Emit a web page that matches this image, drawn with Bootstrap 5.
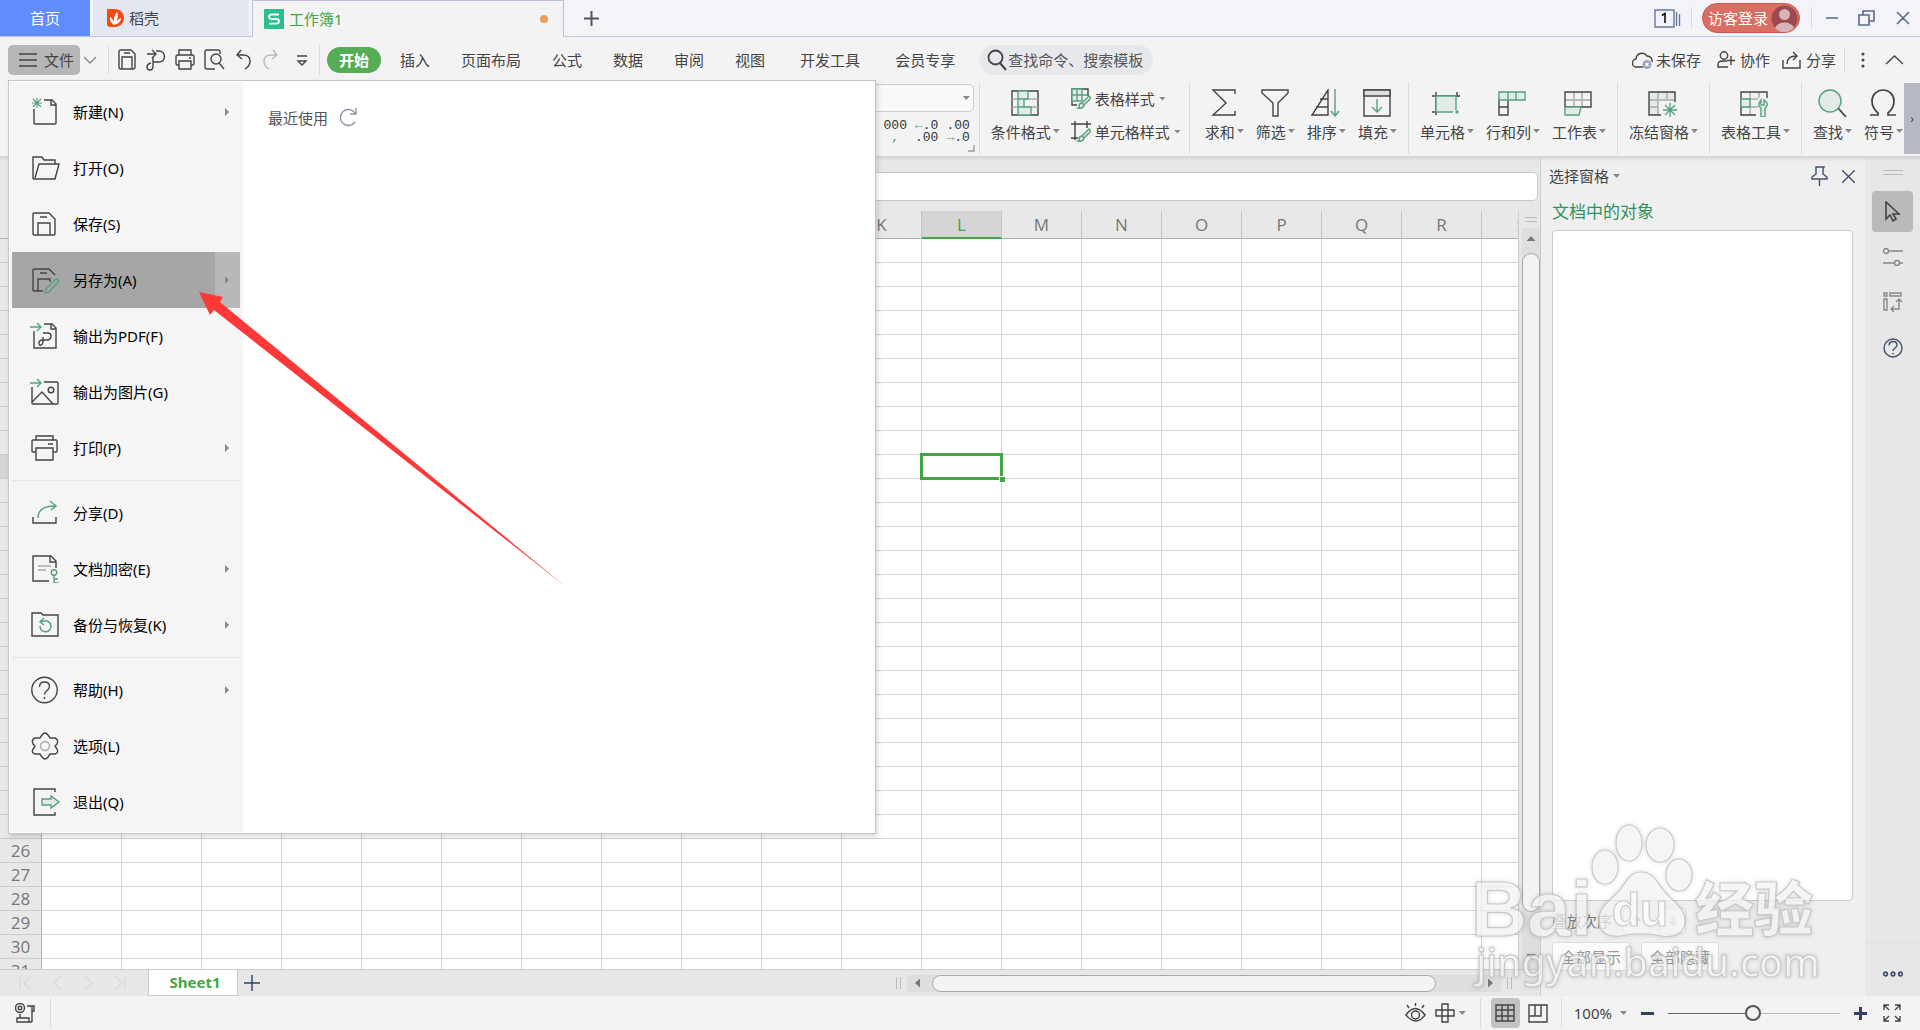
<!DOCTYPE html>
<html lang="zh-CN">
<head>
<meta charset="utf-8">
<meta name="viewport" content="width=device-width, initial-scale=1">
<title>工作簿1</title>
<link rel="stylesheet" href="https://cdn.jsdelivr.net/npm/bootstrap@5.3.0/dist/css/bootstrap.min.css">
<style>
body{font-family:"Noto Sans","Noto Sans CJK SC",sans-serif;font-size:15px;line-height:20px;color:#444;background:#f3f3f3;overflow:hidden}
svg{fill:none;stroke:#444;stroke-width:1.4;flex:none;display:block}
svg .g{stroke:#55a27b}
svg .gf{stroke:#55a27b;fill:#e2ebe6}
svg .l{stroke:#aaa}
button,.doc-tab{font:inherit;color:inherit;background:none;border:0;padding:0;text-decoration:none;white-space:nowrap}
.caret{width:7px;height:4px;background:#888;clip-path:polygon(0 0,100% 0,50% 100%);flex:none}
.vline{width:1px;background:#dcdcdc;flex:none}
/* title bar */
.titlebar{height:37px;background:#f2f4f9;border-bottom:1px solid #bdc7d9}
.doc-tab{height:36px;display:flex;align-items:center;background:#e3e7f0}
.tab-home{width:90px;background:#5f8dff;color:#fff;justify-content:center;margin-right:3px}
.tab-docer{width:156px;padding-left:14px;gap:5px;margin-right:3px}
.tab-book{width:312px;height:37px;padding:0 15px 0 11px;gap:5px;background:#f3f3f3;border:1px solid #bdc1d3;border-bottom:0;color:#3fa83f}
.unsaved{width:8px;height:8px;border-radius:50%;background:#e8a05c}
.login{width:98px;height:30px;border-radius:15px;background:#da6e62;border:1px solid #d0584c;color:#fff;padding:0 1px 0 5px}
/* menu row */
.menurow{height:42px}
.file-btn{width:72px;height:30px;background:#b7b7b7;border-radius:5px;padding-left:11px;gap:7px}
.start-pill{height:26px;border-radius:13px;background:#55ae55;color:#fff;font-weight:700;padding:0 12px}
.ribbon-tabs{gap:31px;margin:0 24px 0 19px}
.search-pill{width:174px;height:30px;border-radius:15px;background:#e6e8eb;padding-left:8px}
.search-pill input{border:0;background:none;width:138px;padding:0;outline:0;color:#555}
.search-pill input::placeholder{color:#555;opacity:1}
/* ribbon */
.ribbon{height:77px}
.ribbon .vline{margin:3px 0 2px}
.rgroup{padding-right:10px}
.rbtn{padding-left:11px;padding-right:10px;position:relative;display:flex;flex-direction:column;justify-content:flex-start;padding-top:10px}
.rbtn svg{align-self:center;margin:0 -4px 0 4px}
.rbtn span{margin-top:5px;height:20px}
.rbtn .caret{position:absolute;right:1px;top:50px}
.numfmt{width:140px;padding:5px 5px 0 0}
.numfmt select{height:28px;border:1px solid #ccc;border-radius:5px;background:#f9f9f9;appearance:none;width:100%}
.numfmt .caret{position:absolute;right:9px;top:17px}
.numtxt{font:13px/12px "Liberation Mono",monospace;color:#333;white-space:pre;text-align:right}
.numtxt i{font-style:normal;color:#55a27b}
.style-col{padding:9px 8px 0 10px;gap:12px}
.more-strip{width:16px;background:#b6b9c3;margin:4px 0 2px;font-size:12px}
/* workspace */
.workspace{border-top:1px solid #d4d4d4;background:#e7e7e7;box-shadow:inset 0 5px 4px -4px #ccc}
.formula{padding:15px 2px 0 12px;height:54px}
.formula input{height:29px;border:1px solid #c8c8c8;border-radius:5px;width:100%}
.sheet-clip{overflow:hidden;border-right:1px solid #ccc;background:#fff;flex:1 1 0;min-width:0}
.cells{border-collapse:separate;border-spacing:0;table-layout:fixed;width:1562px}
.cells th{font:17px/22px "Open Sans","Noto Sans",sans-serif;color:#777;text-align:center;padding:0;background:#e8e8e8}
.cells thead th{height:28px;border-bottom:1px solid #b0b0b0;border-right:1px solid #c4c4c4}
.cells tbody tr{height:24px}
.cells tbody th,.cells tbody td{height:24px;padding:0;border-bottom:1px solid #d2d2d2;border-right:1px solid #d2d2d2}
.cells tbody th{border-right-color:#b0b0b0;border-bottom-color:#ccc}
.cells thead .on{background:#d5d5d5;color:#42a742;box-shadow:inset 0 -1px #42a742;border-bottom-color:#42a742}
.cells tbody .on{background:#d5d5d5}
.cells .pick{position:relative}
.cells .pick::before{content:"";position:absolute;inset:-2px;border:3px solid #42a742}
.cells .pick::after{content:"";position:absolute;right:-4px;bottom:-4px;width:6px;height:6px;background:#42a742;border:1px solid #fff;border-width:1px 0 0 1px}
.vbar{width:21px;padding-left:3px;flex:none}
.vbar .grip{height:17px;margin:0 3px;padding-top:6px}
.grip::before{content:"";display:block;height:5px;border:1px solid #bbb;border-width:1px 0}
.trk{background:#dedede}
.thumb{background:#f3f3f3;border:1px solid #a8a8a8;border-radius:9px}
.tri-u,.tri-d,.tri-l,.tri-r{background:#777;flex:none}
.tri-u,.tri-d{width:9px;height:5px}
.tri-l,.tri-r{width:5px;height:9px}
.tri-u{clip-path:polygon(50% 0,100% 100%,0 100%)}
.tri-d{clip-path:polygon(0 0,100% 0,50% 100%)}
.tri-l{clip-path:polygon(100% 0,100% 100%,0 50%)}
.tri-r{clip-path:polygon(0 0,100% 50%,0 100%)}
.sheetbar{height:27px;border-top:1px solid #ccc;flex:none}
.sheetnav{width:148px;padding-left:19px}
.sheet-tab{width:90px;height:26px;background:#fff;border:1px solid #ccc;border-top:0;color:#42a742;font-weight:700;padding-left:4px;margin-top:-1px}
.hgrip{width:5px;height:12px;border:1px solid #bbb;border-width:0 1px}
.hbar{width:594px;height:17px;margin:0 6px}
/* selection pane */
.pane{width:325px;flex:none;background:#efefef;border-left:1px solid #ccc;box-shadow:inset 0 5px 4px -4px #ccc}
.pane-head{padding:9px 10px 0 8px}
.pane h2{font-size:17px;line-height:24px;color:#2f935c;margin:14px 0 6px 11px;font-weight:400}
.objects{margin:0 12px 0 11px;background:#fff;border:1px solid #ccc;border-radius:4px}
.pane-foot{padding:7px 11px 25px;color:#777}
.pane-foot button{background:#fbfbfb;border:1px solid #ddd;border-radius:3px;color:#999}
.ord{width:26px;height:26px}
.wide{width:78px;height:29px}
.rail{width:55px;flex:none}
.rail-on{width:41px;height:41px;border-radius:4px;background:#bababa}
.railgrip{width:20px;margin-top:13px}
/* status bar */
.statusbar{height:34px}
.view-on{width:29px;height:30px;border-radius:4px;background:#c2c2c2}
.zoomer{appearance:none;width:172px;height:18px;background:linear-gradient(90deg,#666 50%,#b8b8b8 50%) center/100% 1px no-repeat}
.zoomer::-webkit-slider-thumb{appearance:none;width:16px;height:16px;border-radius:50%;background:#f3f3f3;border:2px solid #555}
/* file menu */
.filemenu{position:absolute;left:8px;top:80px;width:868px;border:1px solid #c6c6c6;background:#fff;padding:1px;box-shadow:2px 3px 5px #0002;z-index:5}
.file-list{width:233px;background:#f5f5f5;padding:2px 3px 2px 2px}
.fitem{height:56px;width:100%;padding-left:18px;color:#000;display:flex;align-items:center;gap:11px}
.fitem .sub{margin-left:auto;width:25px;height:56px;display:flex;align-items:center;padding-left:10px}
.fitem .tri-r{background:#888;width:4px;height:8px}
.fitem.on{background:#a6a6a6}
.fitem.on .sub{background:#b8b8b8}
.fsep{height:9px;padding-top:4px}
.fsep::before{content:"";display:block;height:1px;background:#e6e6e6}
.recent{padding:26px 0 0 25px;gap:11px;color:#555}
.pointer{position:absolute;left:190px;top:280px;z-index:6;pointer-events:none}
.wmark{position:absolute;right:90px;bottom:20px;z-index:6;pointer-events:none;filter:drop-shadow(0 0 2px #0003)}
.wmark *{fill:#fff;fill-opacity:.7;stroke:#c0c0c0;stroke-opacity:.8;stroke-width:1.2}
</style>
<script src="https://cdn.jsdelivr.net/npm/bootstrap@5.3.0/dist/js/bootstrap.bundle.min.js"></script>
</head>
<body class="vh-100 d-flex flex-column position-relative">

<header class="titlebar d-flex align-items-start flex-shrink-0">
  <a class="doc-tab tab-home" href="#">首页</a>
  <a class="doc-tab tab-docer" href="#">
    <svg width="17" height="20" viewBox="0 0 17 20"><path d="M0 1h8c5 0 9 4 9 9s-4 9-9 9H3a3 3 0 0 1-3-3z" fill="#fa4a14" stroke="none"/><path d="M7 17C4 15 2.500 12 3 9c2 1 3 3 4 5-.5-4 .5-7 3-10 1.500 3 1 6-1 10 1-2 3-3 5-4-.5 4-3 6-7 7z" fill="#fff" stroke="none"/></svg>
    稻壳</a>
  <a class="doc-tab tab-book" href="#">
    <svg width="20" height="20" viewBox="0 0 20 20"><rect width="20" height="20" rx="1" fill="#2bc08a" stroke="none"/><path d="M15 5.500H8q-3 0-3 2.200T8 10h4q3 0 3 2.300t-3 2.300H5" stroke="#fff" stroke-width="1.800"/></svg>
    工作簿1<i class="unsaved ms-auto"></i></a>
  <button class="align-self-center px-3 ms-1" aria-label="新建标签"><svg width="15" height="15" viewBox="0 0 15 15" style="stroke:#555;stroke-width:2"><path d="M7.500 0v15M0 7.500h15"/></svg></button>
  <div class="ms-auto d-flex align-items-center h-100" style="padding-right:10px">
    <svg width="27" height="19" viewBox="0 0 27 19" style="stroke:#6a789a"><path d="M1 1h19v17H1zM22.500 3v14M25.500 5v12"/><path d="M8 6.500l3-2V14" stroke="#111" stroke-width="1.600"/></svg>
    <i class="vline" style="height:22px;margin:0 10px"></i>
    <button class="login d-flex align-items-center justify-content-between">访客登录
      <svg width="27" height="27" viewBox="0 0 27 27" style="stroke:none"><circle cx="13.500" cy="13.500" r="13" fill="#9c4a52"/><circle cx="13.500" cy="9.500" r="5.500" fill="#d9b3b5"/><path d="M4 23a10 8 0 0 1 19 0 13 13 0 0 1-19 0z" fill="#d9b3b5"/></svg>
    </button>
    <i class="vline" style="height:22px;margin:0 14px 0 11px"></i>
    <svg width="84" height="18" viewBox="0 0 84 18" style="stroke:#5a6a8c;stroke-width:1.600"><path d="M0 9h12M33 6h10v10H33zM37 6V2h11v10h-5M71 3l12 12M83 3L71 15"/></svg>
  </div>
</header>

<nav class="menurow d-flex align-items-center ps-2 pt-1 flex-shrink-0">
  <button class="file-btn d-flex align-items-center"><svg width="18" height="16" viewBox="0 0 18 16"><path d="M0 2h18M0 8h18M0 14h18"/></svg>文件</button>
  <svg class="mx-1" width="12" height="8" viewBox="0 0 12 8" style="stroke:#888"><path d="M0 1l6 6 6-6"/></svg>
  <i class="vline ms-2 me-2" style="height:30px"></i>
  <svg width="192" height="24" viewBox="0 0 192 24">
    <path d="M2 4q0-2 2-2h10l4 4v13q0 2-2 2H4q-2 0-2-2zM5 21V9h10v12M7 5h6"/>
    <path d="M30 6h8M35 2l4 4-4 4M39 3h3a5 5 0 0 1 0 11h-6M36 9v9q0 4-3 4t-3-3 4-4"/>
    <path d="M62 7V2h12v5M62 17h-2q-1 0-1-2V9q0-2 2-2h14q2 0 2 2v6q0 2-1 2h-2M62 13h12v8H62zM72 10h2"/>
    <path d="M95 21h-5q-2 0-2-2V4q0-2 2-2h11q2 0 2 2v2M95 21h3"/><circle cx="99" cy="11" r="5"/><path d="M102 15l5 6"/>
    <path d="M124 2l-4 5 5 4M120 7h6q7 0 7 6 0 5-5 8"/>
    <path d="M156 2l4 5-5 4M160 7h-6q-7 0-7 6 0 5 5 8" stroke="#bbb"/>
    <path d="M180 8h10M181 13l4 4 4-4z"/>
  </svg>
  <i class="vline" style="height:30px;margin:0 7px 0 10px"></i>
  <button class="start-pill">开始</button>
  <div class="ribbon-tabs d-flex align-items-center">
    <button>插入</button><button>页面布局</button><button>公式</button><button>数据</button><button>审阅</button><button>视图</button><button class="ms-1">开发工具</button><button class="ms-1">会员专享</button>
  </div>
  <label class="search-pill d-flex align-items-center"><svg width="21" height="22" viewBox="0 0 21 22"><circle cx="8.500" cy="8.500" r="7" stroke-width="1.800"/><path d="M13 14l6 7" stroke-width="2"/></svg><input type="text" placeholder="查找命令、搜索模板" aria-label="查找命令"></label>
  <div class="d-flex align-items-center ms-auto pe-3">
    <svg width="24" height="18" viewBox="0 0 24 18"><path d="M11 16H5a4 4 0 0 1-1-8 6 6 0 0 1 11-3 5 5 0 0 1 5 6"/><circle cx="15" cy="13.500" r="4.500" fill="#9aa7bb" stroke="none"/><path d="M13.500 12l3 3m0-3l-3 3" stroke="#fff"/></svg>
    <button>未保存</button>
    <svg class="ms-3" width="23" height="18" viewBox="0 0 23 18"><circle cx="7" cy="4.500" r="3.700"/><path d="M11 16H1v-2q0-4 4-4h5M14 5v9M10 9.500h8"/></svg>
    <button>协作</button>
    <svg style="margin-left:12px" width="24" height="18" viewBox="0 0 24 18"><path d="M1 9v8h17V9M5 13q0-8 9-8M11 1l4 4-4 4"/></svg>
    <button>分享</button>
    <i class="vline mx-2" style="height:26px"></i>
    <svg class="ms-2 me-1" width="4" height="16" viewBox="0 0 4 16"><g fill="#444" stroke="none"><circle cx="2" cy="2" r="1.500"/><circle cx="2" cy="8" r="1.500"/><circle cx="2" cy="14" r="1.500"/></g></svg>
    <svg class="ms-3" width="19" height="10" viewBox="0 0 19 10"><path d="M1 9l8.500-8L18 9"/></svg>
  </div>
</nav>

<section class="ribbon d-flex justify-content-end flex-shrink-0">
  <div class="numfmt position-relative">
    <select aria-label="数字格式"><option></option></select><i class="caret"></i>
    <div class="d-flex justify-content-end gap-2 mt-2 pe-1">
      <div class="numtxt">000
<i> , </i></div><div class="numtxt"><i>←</i>.0
.00</div><div class="numtxt">.00
<i>→</i>.0</div>
    </div>
    <svg width="7" height="7" viewBox="0 0 7 7" class="position-absolute end-0 me-1" style="top:66px;stroke:#999"><path d="M6 0v6H0"/></svg>
  </div>
  <i class="vline"></i>
  <button class="rbtn"><svg width="28" height="28" viewBox="0 0 28 28"><path d="M1 2h26v24H1z"/><path class="l" d="M1 10h26M1 18h26"/><path class="gf" d="M7 2h10v8H7zM7 10h6v8H7zM7 18h13v8H7z"/></svg><span>条件格式</span><i class="caret"></i></button>
  <div class="style-col d-flex flex-column">
    <button class="d-flex align-items-center gap-1"><svg width="20" height="21" viewBox="0 0 20 21"><path d="M6 17H1V1h16v7"/><path class="gf" d="M1 1h10v12H1zM1 7h15M6 1v12"/><path class="gf" d="M18 8l2 2-7 7-2-2zM11 15l2 2q-1 4-6 3 2-1 1-3 1-2 3-2z"/></svg>表格样式<i class="caret"></i></button>
    <button class="d-flex align-items-center gap-1"><svg width="20" height="21" viewBox="0 0 20 21"><path d="M4 0v19M0 3h20M0 17h7M16 0v7"/><path class="gf" d="M18 8l2 2-7 7-2-2zM11 15l2 2q-1 4-6 3 2-1 1-3 1-2 3-2z"/></svg>单元格样式<i class="caret"></i></button>
  </div>
  <i class="vline"></i>
  <div class="rgroup d-flex ps-1">
    <button class="rbtn"><svg width="28" height="28" viewBox="0 0 28 28"><path d="M25 5V1H3l13 13L3 26h22v-4"/></svg><span>求和</span><i class="caret"></i></button>
    <button class="rbtn"><svg width="28" height="28" viewBox="0 0 28 28"><path d="M1 1h26v3L17 14v13h-5V14L1 4z"/></svg><span>筛选</span><i class="caret"></i></button>
    <button class="rbtn"><svg width="30" height="28" viewBox="0 0 30 28"><path d="M17 1v25H1zM9 10h8M5 18h12"/><path class="g" d="M24 0v27M20 22l4 5 4-5"/></svg><span>排序</span><i class="caret"></i></button>
    <button class="rbtn"><svg width="28" height="28" viewBox="0 0 28 28"><path d="M1 1h26v26H1z"/><path d="M1 1h26v6H1z" fill="#ddd"/><path class="g" d="M14 10v13M9 18l5 5 5-5"/></svg><span>填充</span><i class="caret"></i></button>
  </div>
  <i class="vline"></i>
  <div class="rgroup d-flex">
    <button class="rbtn"><svg width="30" height="28" viewBox="0 0 30 28"><path d="M5 3v23M26 3v5M1 7h28M1 23h5"/><path class="gf" d="M25 21V7H5v16h17"/><circle cx="26" cy="23" r="1" class="g"/></svg><span>单元格</span><i class="caret"></i></button>
    <button class="rbtn"><svg width="28" height="28" viewBox="0 0 28 28"><path d="M1 10h9v16H1zM1 18h9"/><path class="gf" d="M1 3h26v8H1zM10 3v8M18 3v8"/></svg><span>行和列</span><i class="caret"></i></button>
    <button class="rbtn"><svg width="28" height="28" viewBox="0 0 28 28"><path class="l" d="M10 3v16M18 3v16M1 11h26"/><path d="M1 3h26v15H1z"/><path class="gf" d="M1 18h16l-2 8H1z"/></svg><span>工作表</span><i class="caret"></i></button>
  </div>
  <i class="vline"></i>
  <div class="rgroup d-flex">
    <button class="rbtn"><svg width="30" height="28" viewBox="0 0 30 28"><path d="M1 3h26v8H10v15H1z" fill="#e2ebe6" stroke="none"/><path class="l" d="M10 3v23M19 3v8M1 11h26M1 18h9"/><path d="M13 26H1V3h26v10"/><path class="g" d="M22 14v14M15 21h14M17 16l10 10M27 16L17 26"/></svg><span>冻结窗格</span><i class="caret"></i></button>
  </div>
  <i class="vline"></i>
  <div class="rgroup d-flex">
    <button class="rbtn"><svg width="30" height="28" viewBox="0 0 30 28"><path class="l" d="M10 3v23M19 3v6M1 10h17M1 18h17"/><path d="M16 26H1V3h26v6"/><path class="gf" d="M1 10h9v8H1z"/><path class="gf" d="M21 28V19q-3-2-2-5l2-3v5h3v-5l3 3q1 3-2 5v9z"/></svg><span>表格工具</span><i class="caret"></i></button>
  </div>
  <i class="vline"></i>
  <div class="d-flex">
    <button class="rbtn"><svg width="30" height="28" viewBox="0 0 30 28"><path d="M21 19l8 9" stroke-width="1.800"/><circle class="gf" cx="13" cy="12" r="11"/></svg><span>查找</span><i class="caret"></i></button>
    <button class="rbtn"><svg width="28" height="28" viewBox="0 0 28 28"><path d="M1 26h8v-2Q3 19 3 12a11 11 0 0 1 22 0q0 7-6 12v2h8" stroke-width="1.700"/></svg><span>符号</span><i class="caret"></i></button>
  </div>
  <div class="more-strip d-flex align-items-center justify-content-center">›</div>
</section>

<main class="d-flex flex-fill workspace" style="min-height:0">
  <div class="d-flex flex-column flex-fill" style="min-width:0">
    <div class="formula flex-shrink-0"><input type="text" aria-label="编辑栏"></div>
    <div class="d-flex flex-fill" style="min-height:0">
      <div class="sheet-clip"><table class="cells" id="cells"></table></div>
      <div class="vbar d-flex flex-column">
        <div class="grip"></div>
        <div class="trk d-flex flex-column align-items-center flex-fill">
          <i class="tri-u my-2"></i>
          <div class="thumb w-100 flex-fill mt-1"></div>
          <i class="tri-d" style="margin:42px 0 10px"></i>
        </div>
      </div>
    </div>
    <div class="sheetbar d-flex align-items-center">
      <div class="sheetnav d-flex"><svg width="108" height="16" viewBox="0 0 108 16" style="stroke:#dadada"><path d="M1 1v14M12 1L5 8l7 7M42 1l-7 7 7 7M66 1l7 7-7 7M96 1l7 7-7 7M106 1v14"/></svg></div>
      <button class="sheet-tab">Sheet1</button>
      <svg style="margin-left:6px" width="16" height="16" viewBox="0 0 16 16"><path stroke="#33415f" d="M8 0v16M0 8h16"/></svg>
      <i class="hgrip ms-auto"></i>
      <div class="hbar trk d-flex align-items-center"><i class="tri-l mx-2"></i><div class="thumb h-100 ms-1" style="width:504px"></div><i class="tri-r ms-auto me-2"></i></div>
      <i class="hgrip" style="margin-right:28px"></i>
    </div>
  </div>

  <aside class="pane d-flex flex-column">
    <div class="pane-head d-flex align-items-center"><span>选择窗格</span><i class="caret ms-1"></i>
      <svg class="ms-auto" width="17" height="20" viewBox="0 0 17 20" style="stroke:#42506c"><path d="M5 1h8l-1 2v5l4 3v2H1v-2l4-3V3zM8.500 13v7"/></svg>
      <svg style="margin-left:14px;stroke:#42506c" width="13" height="13" viewBox="0 0 13 13"><path d="M0 0l13 13M13 0L0 13"/></svg></div>
    <h2>文档中的对象</h2>
    <div class="objects flex-fill"></div>
    <div class="pane-foot">
      <div class="d-flex align-items-center"><span>叠放次序</span>
        <button class="ord" style="margin-left:11px" aria-label="上移"><svg class="m-auto" width="12" height="14" viewBox="0 0 12 14"><path d="M6 1l5 6H8v5H4V7H1z" fill="#888" stroke="none"/></svg></button>
        <button class="ord" style="margin-left:11px" aria-label="下移"><svg class="m-auto" width="12" height="14" viewBox="0 0 12 14"><path d="M6 13l5-6H8V2H4v5H1z" fill="#ccc" stroke="none"/></svg></button></div>
      <div class="d-flex mt-2" style="gap:11px"><button class="wide">全部显示</button><button class="wide">全部隐藏</button></div>
    </div>
  </aside>

  <nav class="rail d-flex flex-column align-items-center">
    <div class="grip railgrip"></div>
    <button class="rail-on mt-3 d-flex align-items-center justify-content-center" aria-label="选择"><svg width="17" height="21" viewBox="0 0 17 21"><path d="M2 1v17l4-4 3 6 3-2-3-5h6z" stroke-width="1.600"/></svg></button>
    <svg style="margin-top:16px;stroke:#888" width="20" height="18" viewBox="0 0 20 18"><circle cx="3" cy="3" r="2.500"/><path d="M6 3h14M0 15h11M17 15h3"/><circle cx="14" cy="15" r="2.500"/></svg>
    <svg style="margin-top:26px;stroke:#888" width="20" height="20" viewBox="0 0 20 20"><path d="M1 1h3v3H1zM7 1h11v3H7zM1 7h3v11H1zM16 8v9H8M13 10l3-3 3 3M11 14l-3 3 3 3"/></svg>
    <svg style="margin-top:26px;stroke:#42506c" width="20" height="20" viewBox="0 0 20 20"><circle cx="10" cy="10" r="9"/><path d="M6 7.500q0-4 4-4t4 3.500c0 3-4 3-4 6M10 15v1.500"/></svg>
    <div class="mt-auto border-top w-100 px-1" style="height:54px"><svg class="mx-auto" style="margin-top:27px;stroke:#42506c" width="20" height="8" viewBox="0 0 20 8"><g stroke-width="1.700"><circle cx="2.500" cy="4" r="1.800"/><circle cx="10" cy="4" r="1.800"/><circle cx="17.500" cy="4" r="1.800"/></g></svg></div>
  </nav>
</main>

<footer class="statusbar d-flex align-items-center flex-shrink-0">
  <svg style="margin:0 15px" width="20" height="20" viewBox="0 0 20 20"><circle cx="5" cy="5" r="4.500"/><circle cx="5" cy="5" r="1.800"/><path d="M12 3h5v16M17 3h2v5h-2M5 11v4M2 15h12v4H2zM14 19h3"/></svg>
  <i class="vline" style="height:30px"></i>
  <div class="d-flex align-items-center ms-auto" style="margin-right:19px">
    <svg width="21" height="20" viewBox="0 0 21 20"><path d="M1 12q9-13 19 0-9 12-19 0z"/><circle cx="10.500" cy="12" r="4"/><path d="M10.500 0v3M2 2l2 3M19 2l-2 3"/></svg>
    <svg style="margin:0 4px 0 9px" width="20" height="20" viewBox="0 0 20 20"><path d="M7 1h6v18H7zM1 7h18v6H1z"/></svg><i class="caret"></i>
    <i class="vline" style="height:30px;margin:0 10px 0 14px"></i>
    <button class="view-on" aria-label="普通视图"><svg class="m-auto" width="20" height="18" viewBox="0 0 20 18"><path d="M1 1h18v16H1zM1 6h18M1 12h18M7 1v16M13 1v16"/></svg></button>
    <svg style="margin:0 13px 0 8px" width="20" height="19" viewBox="0 0 20 19"><path d="M1 1h18v17H1zM1 12h12V1M7 1v11"/></svg>
    <i class="vline me-2" style="height:30px"></i>
    <span class="ms-1">100%</span><i class="caret ms-2"></i>
    <svg style="margin:0 14px;stroke:#33415f;stroke-width:3" width="13" height="13" viewBox="0 0 13 13"><path d="M0 6.500h13"/></svg>
    <input class="zoomer" type="range" min="10" max="190" value="99" aria-label="缩放">
    <svg style="margin:0 16px 0 14px;stroke:#33415f;stroke-width:3" width="13" height="13" viewBox="0 0 13 13"><path d="M0 6.500h13M6.500 0v13"/></svg>
    <svg width="18" height="18" viewBox="0 0 18 18"><path d="M1 6V1h5M1 1l5 5M12 1h5v5M17 1l-5 5M1 12v5h5M1 17l5-5M12 17h5v-5M17 17l-5-5"/></svg>
  </div>
</footer>

<section class="filemenu d-flex">
  <div class="file-list">
    <button class="fitem"><svg width="32" height="28" viewBox="0 0 32 28"><path d="M14 2h8l4 4v19q0 1-1 1H5q-1 0-1-1V11M21 2v5h5"/><path class="g" d="M7 0v10M2 5h10M3 1l8 8M11 1L3 9" stroke-width="1.100"/></svg>新建(N)<span class="sub"><i class="tri-r"></i></span></button>
    <button class="fitem"><svg width="32" height="28" viewBox="0 0 32 28"><path d="M3 25V3h9l2 3h11v4M3 25h22l4-15H9L5 24"/></svg>打开(O)</button>
    <button class="fitem"><svg width="32" height="28" viewBox="0 0 32 28"><path d="M3 4q0-1 1-1h15l6 6v15q0 1-1 1H4q-1 0-1-1zM8 25V13h12v12M10 7h7"/></svg>保存(S)</button>
    <button class="fitem on"><svg width="32" height="28" viewBox="0 0 32 28"><path d="M13 25H4q-1 0-1-1V4q0-1 1-1h15l6 6M8 25V13h12v3M10 7h7"/><path class="g" d="M26 13q2 0 3 2L19 26l-4 1 1-4z"/></svg>另存为(A)<span class="sub"><i class="tri-r"></i></span></button>
    <button class="fitem"><svg width="32" height="28" viewBox="0 0 32 28"><path d="M14 2h8l4 4v20H4V9M21 2v5h5M13 11h5q3 0 3 3 0 4-4 4h-4q-4 0-4 3t2 2 2-3v-5"/><path class="g" d="M0 5h11M7 1l4 4-4 4"/></svg>输出为PDF(F)</button>
    <button class="fitem"><svg width="32" height="28" viewBox="0 0 32 28"><path d="M14 4h13q1 0 1 1v20q0 1-1 1H3q-1 0-1-1V9M2 24l10-10 11 12"/><circle cx="21" cy="12" r="2.800"/><path class="g" d="M0 5h11M7 1l4 4-4 4"/></svg>输出为图片(G)</button>
    <button class="fitem"><svg width="32" height="28" viewBox="0 0 32 28"><path d="M6 6V2h17v4M6 18H3q-1 0-1-1V7q0-1 1-1h23q1 0 1 1v10q0 1-1 1h-3M6 14h17v12H6zM18 10h5"/></svg>打印(P)<span class="sub"><i class="tri-r"></i></span></button>
    <div class="fsep"></div>
    <button class="fitem"><svg width="32" height="28" viewBox="0 0 32 28"><path d="M3 18v6h23v-6"/><path class="g" d="M8 19Q8 7 25 7M20 2l6 5-5 4"/></svg>分享(D)</button>
    <button class="fitem"><svg width="32" height="28" viewBox="0 0 32 28"><path d="M19 26H3V1h18l5 5v7M20 1v6h6"/><path class="l" d="M8 11h13M8 15h8"/><path class="g" d="M24 20v8h5M24 24h4"/><circle class="g" cx="24" cy="17.500" r="2.700"/></svg>文档加密(E)<span class="sub"><i class="tri-r"></i></span></button>
    <button class="fitem"><svg width="32" height="28" viewBox="0 0 32 28"><path d="M2 2h9l2 2h15v21H2z"/><path class="g" d="M10 15a5.500 5.500 0 1 0 4-5l-4 1M14 7l-4 4 4 3"/></svg>备份与恢复(K)<span class="sub"><i class="tri-r"></i></span></button>
    <div class="fsep"></div>
    <button class="fitem"><svg width="32" height="28" viewBox="0 0 32 28"><circle cx="14.500" cy="14" r="12.700"/><path d="M9.500 11q0-5 5-5t5 4.500c0 4-5 4-5 8M14.500 21v2"/></svg>帮助(H)<span class="sub"><i class="tri-r"></i></span></button>
    <button class="fitem"><svg width="32" height="28" viewBox="0 0 32 28"><path d="M12 3q3-4 6 0l2 3h5q4 2 2 6l-2 2 2 3q2 4-2 5h-5l-2 3q-3 4-6 0l-2-3H5q-4-1-2-5l2-3-2-2Q1 8 5 6h5z"/><circle class="l" cx="15" cy="14" r="4.500"/></svg>选项(L)</button>
    <button class="fitem"><svg width="32" height="28" viewBox="0 0 32 28"><path d="M25 4V1H4v26h21v-3"/><path class="gf" d="M12 11h9V8l8 6-8 6v-3h-9z"/></svg>退出(Q)</button>
  </div>
  <div class="recent d-flex align-items-start"><span>最近使用</span>
    <svg width="19" height="20" viewBox="0 0 19 20" style="stroke:#8d96a8"><path d="M16 14a8 8 0 1 1 0-9M17 0v6h-6"/></svg></div>
</section>

<svg class="pointer" width="380" height="310" viewBox="190 280 380 310"><path d="M199 292l24 5-3 5 346 285L214 310l-4 5z" fill="#fd3838" stroke="none"/></svg>

<svg class="wmark" width="360" height="190" viewBox="1470 820 360 190">
  <ellipse cx="1605" cy="867" rx="13" ry="17"/><ellipse cx="1629" cy="843" rx="13" ry="18"/><ellipse cx="1660" cy="845" rx="14" ry="17"/><ellipse cx="1679" cy="875" rx="13" ry="16"/>
  <path d="M1641 872c12 0 15 9 23 19 10 11 21 18 21 30 0 13-12 17-23 15-14-3-28-3-42 0-13 1-21-4-21-17 0-11 11-19 20-28 8-10 11-19 22-19z"/>
  <text x="1471" y="936" font-family="Liberation Sans" font-weight="700" font-size="78">Bai</text>
  <text x="1612" y="926" font-family="Liberation Sans" font-weight="700" font-size="46">du</text>
  <text x="1695" y="931" font-family="Noto Sans CJK SC" font-weight="900" font-size="59">经验</text>
  <text x="1476" y="977" font-family="Noto Sans" font-weight="500" font-size="39">jingyan.baidu.com</text>
</svg>

<script>
  const cols = 'ABCDEFGHIJKLMNOPQRS'.split('');
  let html = '<colgroup><col style="width:42px">' + '<col style="width:80px">'.repeat(cols.length) + '</colgroup><thead><tr><th></th>';
  cols.forEach(c => html += `<th${c === 'L' ? ' class="on"' : ''}>${c}</th>`);
  html += '</tr></thead><tbody>';
  for (let r = 1; r <= 31; r++) {
    html += `<tr><th${r === 10 ? ' class="on"' : ''}>${r}</th>`;
    cols.forEach(c => html += c === 'L' && r === 10 ? '<td class="pick"></td>' : '<td></td>');
    html += '</tr>';
  }
  document.getElementById('cells').innerHTML = html + '</tbody>';
</script>
</body>
</html>
